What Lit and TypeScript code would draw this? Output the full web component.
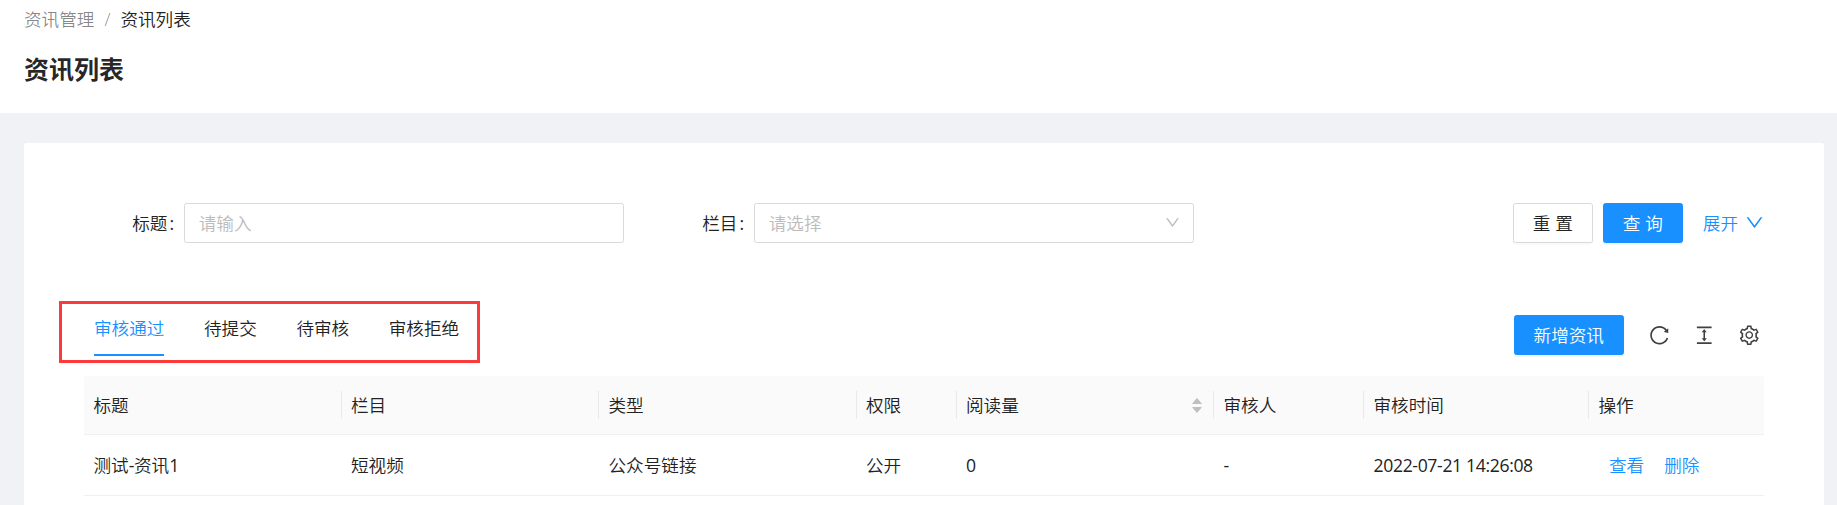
import { LitElement, html, css, svg } from "lit";
import { customElement, property, state } from "lit/decorators.js";

const PATHS: Record<string, string> = {
  down: "M884 256h-75c-5.100 0-9.900 2.500-12.900 6.600L512 654.200 227.900 262.600c-3-4.100-7.800-6.600-12.900-6.600h-75c-6.500 0-10.300 7.400-6.500 12.700l352.600 486.100c12.800 17.600 39 17.600 51.700 0l352.600-486.100c3.900-5.300.1-12.700-6.400-12.700z",
  reload: "M909.1 209.300l-56.400 44.100C775.800 155.100 656.200 92 521.900 92 290 92 102.300 279.500 102 511.500 101.700 743.700 289.800 932 521.900 932c181.300 0 335.800-115 394.600-276.100 1.500-4.200-.7-8.900-4.900-10.300l-56.700-19.500a8 8 0 00-10.100 4.800c-1.800 5-3.800 10-5.900 14.900-17.300 41-42.100 77.800-73.700 109.400A344.770 344.770 0 01655.900 829c-42.300 17.900-87.400 27-133.800 27-46.500 0-91.500-9.100-133.800-27A341.500 341.500 0 01279 755.200a342.160 342.160 0 01-73.700-109.400c-17.900-42.400-27-87.400-27-133.900s9.100-91.500 27-133.900c17.300-41 42.100-77.800 73.700-109.400 31.600-31.600 68.400-56.400 109.300-73.800 42.300-17.900 87.400-27 133.800-27 46.500 0 91.500 9.100 133.800 27a341.500 341.500 0 01109.300 73.800c9.900 9.900 19.200 20.400 27.800 31.400l-60.200 47a8 8 0 003 14.100l175.600 43c5 1.200 9.900-2.600 9.900-7.700l.8-180.900c-.1-6.600-7.800-10.300-13-6.200z",
  height: "M840 836H184c-4.400 0-8 3.600-8 8v60c0 4.400 3.600 8 8 8h656c4.400 0 8-3.600 8-8v-60c0-4.400-3.600-8-8-8zm0-724H184c-4.400 0-8 3.600-8 8v60c0 4.400 3.600 8 8 8h656c4.400 0 8-3.600 8-8v-60c0-4.400-3.600-8-8-8zM610.800 378c6 0 9.400-7 5.700-11.700L515.700 238.700a7.140 7.140 0 00-11.300 0L403.600 366.300a7.230 7.230 0 005.700 11.700H476v268h-62.800c-6 0-9.400 7-5.700 11.700l100.800 127.500c2.900 3.700 8.500 3.700 11.300 0l100.800-127.500c3.700-4.700.4-11.700-5.700-11.700H548V378h62.800z",
  setting: "M924.800 625.700l-65.500-56c3.100-19 4.700-38.400 4.700-57.800s-1.600-38.800-4.700-57.800l65.500-56a32.030 32.030 0 009.300-35.200l-.9-2.600a443.740 443.740 0 00-79.700-137.900l-1.800-2.100a32.120 32.120 0 00-35.100-9.500l-81.300 28.900c-30-24.600-63.500-44-99.700-57.600l-15.700-85a32.050 32.050 0 00-25.800-25.700l-2.700-.5c-52.100-9.400-106.900-9.400-159 0l-2.700.5a32.050 32.050 0 00-25.800 25.700l-15.800 85.400a351.860 351.860 0 00-99 57.400l-81.900-29.100a32 32 0 00-35.100 9.500l-1.800 2.100a446.020 446.020 0 00-79.700 137.900l-.9 2.600c-4.500 12.500-.8 26.500 9.300 35.200l66.300 56.600c-3.100 18.800-4.600 38-4.600 57.100 0 19.200 1.500 38.400 4.600 57.100L99 625.500a32.030 32.030 0 00-9.300 35.200l.9 2.600c18.100 50.400 44.900 96.900 79.700 137.900l1.800 2.100a32.120 32.120 0 0035.100 9.500l81.900-29.100c29.800 24.500 63.100 43.900 99 57.400l15.800 85.400a32.050 32.050 0 0025.800 25.700l2.700.5a449.400 449.400 0 00159 0l2.700-.5a32.050 32.050 0 0025.800-25.700l15.700-85a350 350 0 0099.700-57.600l81.300 28.900a32 32 0 0035.100-9.500l1.800-2.100c34.800-41.100 61.600-87.500 79.700-137.900l.9-2.600c4.500-12.300.8-26.300-9.300-35zM788.300 465.900c2.500 15.100 3.800 30.600 3.800 46.100s-1.300 31-3.800 46.100l-6.600 40.100 74.700 63.900a370.030 370.030 0 01-42.600 73.600L721 702.800l-31.400 25.800c-23.900 19.600-50.500 35-79.300 45.800l-38.100 14.300-17.900 97a377.500 377.500 0 01-85 0l-17.900-97.200-37.800-14.500c-28.500-10.800-55-26.200-78.700-45.700l-31.400-25.900-93.400 33.200c-17-22.900-31.200-47.600-42.600-73.600l75.500-64.500-6.500-40c-2.400-14.900-3.700-30.300-3.700-45.500 0-15.300 1.200-30.600 3.700-45.500l6.500-40-75.500-64.500c11.300-26.100 25.600-50.700 42.600-73.600l93.400 33.200 31.400-25.900c23.700-19.500 50.200-34.900 78.700-45.700l37.900-14.300 17.900-97.200c28.100-3.200 56.800-3.200 85 0l17.900 97 38.100 14.300c28.700 10.800 55.400 26.200 79.300 45.800l31.400 25.800 92.800-32.900c17 22.900 31.200 47.600 42.600 73.600L781.800 426l6.500 39.900zM512 326c-97.200 0-176 78.800-176 176s78.800 176 176 176 176-78.800 176-176-78.800-176-176-176zm79.200 255.200A111.600 111.600 0 01512 614c-29.900 0-58-11.700-79.200-32.800A111.600 111.600 0 01400 502c0-29.900 11.700-58 32.800-79.200C454 401.600 482.100 390 512 390c29.900 0 58 11.600 79.200 32.800A111.600 111.600 0 01624 502c0 29.900-11.700 58-32.800 79.200z",
  caretUp: "M858.900 689L530.500 308.200c-9.400-10.900-27.500-10.900-37 0L165.100 689c-12.200 14.200-1.200 35 18.500 35h656.800c19.700 0 30.700-20.800 18.500-35z",
  caretDown: "M840.400 300H183.600c-19.700 0-30.700 20.800-18.500 35l328.400 380.800c9.400 10.900 27.500 10.900 37 0L858.900 335c12.200-14.200 1.200-35-18.500-35z",
};

@customElement("ui-icon")
class UiIcon extends LitElement {
  @property() name = "down";
  static styles = css`
    :host { display: inline-flex; flex: none; width: 1em; height: 1em; }
    svg { width: 100%; height: 100%; fill: currentColor; display: block; }
  `;
  render() {
    return html`<svg viewBox="0 0 1024 1024">${svg`<path d=${PATHS[this.name]}></path>`}</svg>`;
  }
}

@customElement("app-root")
class AppRoot extends LitElement {
  @state() private active = 0;

  private tabs = ["审核通过", "待提交", "待审核", "审核拒绝"];
  private columns = ["标题", "栏目", "类型", "权限", "阅读量", "审核人", "审核时间", "操作"];
  private rows = [["测试-资讯1", "短视频", "公众号链接", "公开", "0", "-", "2022-07-21 14:26:08"]];

  static styles = css`
    :host {
      display: block; height: 505px; overflow: hidden; background: #f0f2f5;
      font: 350 17.6px/27.5px "Open Sans", "Noto Sans CJK SC", sans-serif;
      color: #222;
    }
    * { box-sizing: border-box; }
    .header { height: 113px; background: #fff; padding: 6px 24px 0; }
    .crumbs { display: flex; gap: 10px; color: rgba(0, 0, 0, 0.48); }
    .crumbs .current { color: #222; }
    .title { margin: 15px 0 0; font-size: 25px; line-height: 40px; font-weight: 700; color: rgba(0, 0, 0, 0.85); }
    .card { margin: 30px 13px 0 24px; height: 400px; background: #fff; border-radius: 2.5px; padding: 60px 60px 0; }
    .search { display: flex; align-items: center; height: 40px; }
    .label { display: flex; justify-content: flex-end; gap: 2px; white-space: nowrap; padding: 2px 10px 0 0; }
    .label span + span { font-weight: 400; }
    .label.first { width: 100px; }
    .label.second { width: 130px; }
    .field {
      width: 440px; height: 40px; border: 1px solid #d9d9d9; border-radius: 2.5px; padding: 2px 12.5px 0 13.75px;
      display: flex; align-items: center; justify-content: space-between; color: #bcbcbc;
    }
    .field ui-icon { font-size: 17px; margin-top: -3px; }
    .actions { margin-left: auto; display: flex; align-items: center; gap: 10px; }
    .btn {
      height: 40px; padding: 2px 18.75px 0; font: inherit; border-radius: 2.5px; border: 1px solid #d9d9d9;
      background: #fff; color: #222; box-shadow: 0 2px 0 rgba(0, 0, 0, 0.02); white-space: nowrap;
    }
    .btn.narrow { width: 80px; padding: 2px 0 0; word-spacing: 0.5px; }
    .btn.primary { background: #1890ff; border-color: #1890ff; color: #fff; box-shadow: 0 2px 0 rgba(0, 0, 0, 0.045); }
    .expand { display: flex; align-items: center; gap: 6px; color: #1890ff; margin: 2px -1px 0 10px; }
    .expand ui-icon { font-size: 21px; margin-top: -3px; }
    .toolbar { display: flex; justify-content: space-between; height: 75px; margin-top: 58px; margin-left: -25px; }
    .frame { width: 421px; height: 62px; border: 3px solid #fb3b3b; padding: 0 32px; }
    .tabs { display: flex; gap: 39.6px; height: 52px; }
    .tab { padding-top: 11px; border-bottom: 2px solid transparent; white-space: nowrap; cursor: pointer; }
    .tab.on { color: #1890ff; border-color: #1890ff; }
    .tools { display: flex; align-items: center; height: 40px; margin-top: 14px; padding-right: 3.75px; color: rgba(0, 0, 0, 0.75); }
    .tools .btn { width: 110px; padding: 2px 0 0; margin-right: 1.5px; }
    .tools ui-icon { font-size: 22.5px; margin-left: 22.5px; }
    .grid { display: grid; grid-template-columns: 257.5px 257.5px 257.5px 100px 257.5px 150px 225px 175px; border-bottom: 1px solid #f0f0f0; align-items: center; }
    .head { height: 59px; background: #fafafa; border-radius: 2.5px 2.5px 0 0; }
    .body { height: 61px; }
    .th { height: 28px; padding: 0 9.5px; border-right: 1.5px solid #e9e9e9; display: flex; align-items: center; justify-content: space-between; }
    .th > span:first-child { padding-top: 2px; }
    .th:last-child { border: 0; }
    .td { padding: 2px 9.5px 0; white-space: nowrap; }
    .latin { font-weight: 400; letter-spacing: -0.35px; }
    .links { display: flex; gap: 20px; padding-left: 20px; color: #1890ff; }
    .sorter { display: flex; flex-direction: column; color: #bfbfbf; font-size: 14px; }
    .sorter ui-icon + ui-icon { margin-top: -5px; }
  `;

  // Latin runs carry their own weight so digits balance with the Chinese glyphs.
  private cell(text: string) {
    return text.split(/([\x20-\x7e]+)/).filter(Boolean).map((part) =>
      /^[\x20-\x7e]/.test(part) ? html`<span class="latin">${part}</span>` : part);
  }

  render() {
    return html`
      <div class="header">
        <div class="crumbs"><span>资讯管理</span><span>/</span><span class="current">资讯列表</span></div>
        <h1 class="title">资讯列表</h1>
      </div>
      <div class="card">
        <div class="search">
          <span class="label first"><span>标题</span><span>:</span></span>
          <div class="field">请输入</div>
          <span class="label second"><span>栏目</span><span>:</span></span>
          <div class="field">请选择<ui-icon name="down"></ui-icon></div>
          <div class="actions">
            <button class="btn narrow">重 置</button>
            <button class="btn narrow primary">查 询</button>
            <span class="expand">展开<ui-icon name="down"></ui-icon></span>
          </div>
        </div>
        <div class="toolbar">
          <div class="frame">
            <div class="tabs">
              ${this.tabs.map((t, i) => html`<div class="tab ${i === this.active ? "on" : ""}" @click=${() => (this.active = i)}>${t}</div>`)}
            </div>
          </div>
          <div class="tools">
            <button class="btn primary">新增资讯</button>
            <ui-icon name="reload"></ui-icon><ui-icon name="height"></ui-icon><ui-icon name="setting"></ui-icon>
          </div>
        </div>
        <div class="grid head">
          ${this.columns.map((c, i) => html`<div class="th"><span>${c}</span>${i === 4
            ? html`<span class="sorter"><ui-icon name="caretUp"></ui-icon><ui-icon name="caretDown"></ui-icon></span>`
            : ""}</div>`)}
        </div>
        ${this.rows.map((r) => html`<div class="grid body">
          ${r.map((c) => html`<div class="td">${this.cell(c)}</div>`)}
          <div class="td links"><span>查看</span><span>删除</span></div>
        </div>`)}
      </div>
    `;
  }
}
